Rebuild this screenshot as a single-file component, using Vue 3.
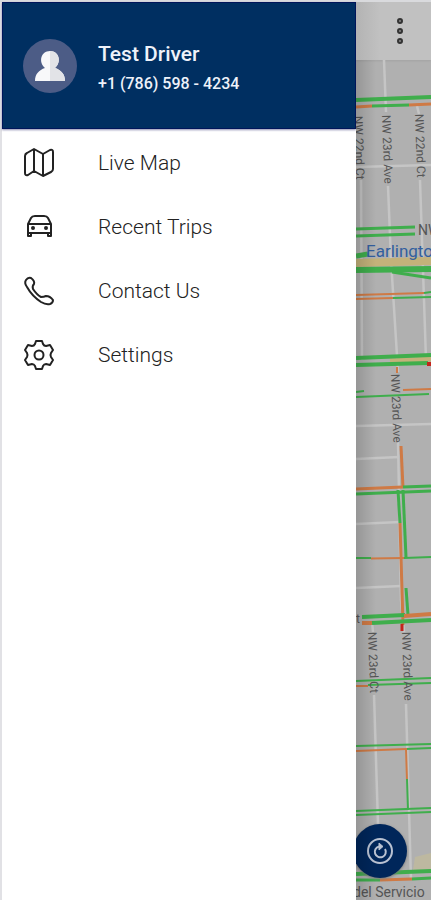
<template>
  <div class="screen">
    <aside class="drawer">
      <header class="profile">
        <svg class="avatar" viewBox="0 0 54 54" aria-hidden="true">
          <circle cx="27" cy="27" r="27" fill="#4c5c86" />
          <path
            d="M12 42c0-7 4-11 10-13-7-6-4-17 5-17s12 11 5 17c6 2 10 6 10 13z"
            fill="#f8f8fa"
          />
          <path d="M27 12c9 0 12 11 5 17 6 2 10 6 10 13H27z" fill="#e2e3e7" />
        </svg>
        <div class="driver">
          <h1 class="name">Test Driver</h1>
          <p class="phone">+1 (786) 598 - 4234</p>
        </div>
      </header>

      <nav class="menu">
        <a v-for="item in items" :key="item.label" class="link" href="#">
          <svg class="icon" viewBox="0 0 30 30" aria-hidden="true">
            <path v-for="d in item.paths" :key="d" :d="d" />
            <circle
              v-for="c in item.circles"
              :key="c.x"
              :cx="c.x"
              :cy="c.y"
              :r="c.r"
            />
          </svg>
          <span>{{ item.label }}</span>
        </a>
      </nav>
    </aside>

    <main class="content">
      <div class="toolbar">
        <button class="more" type="button" aria-label="More options">
          <svg viewBox="0 0 12 30" aria-hidden="true">
            <circle cx="6" cy="5" r="2" />
            <circle cx="6" cy="15" r="2" />
            <circle cx="6" cy="25" r="2" />
          </svg>
        </button>
      </div>

      <div class="map">
        <svg class="tiles" viewBox="356 60 75 840">
          <!-- park and minor streets -->
          <path d="M415 857L431 853V870H413z" fill="#bdb8a0" />
          <path
            v-for="d in streets"
            :key="d"
            :d="d"
            stroke="#c5c5c5"
            stroke-width="2.5"
            fill="none"
          />
          <path d="M356 263L431 261" stroke="#c3b27a" stroke-width="8" />
          <path d="M390 361L431 359" stroke="#c3b27a" stroke-width="5" />
          <!-- traffic -->
          <path
            v-for="t in traffic"
            :key="t.d"
            :d="t.d"
            :stroke="colors[t.c]"
            :stroke-width="t.w || 2"
            fill="none"
          />
          <g class="labels">
            <text
              v-for="l in labels"
              :key="l.x + '-' + l.y"
              :transform="`translate(${l.x} ${l.y}) rotate(${l.r})`"
            >
              {{ l.text }}
            </text>
            <text x="418" y="235" class="street">NW</text>
            <text x="366" y="257" class="place">Earlington</text>
            <text x="353" y="897" class="street">del Servicio</text>
          </g>
        </svg>
        <button class="refresh" type="button" aria-label="Refresh">
          <svg viewBox="0 0 28 28" aria-hidden="true">
            <circle cx="14" cy="14" r="12" stroke-width="2" />
            <path d="M19 12A5.500 5.500 0 1 1 13 9.500" stroke-width="2" />
            <path d="M13 6L17 9.500L13 13z" class="tip" />
          </svg>
        </button>
      </div>
    </main>
  </div>
</template>

<script setup>
const items = [
  {
    label: 'Live Map',
    paths: [
      'M1 8Q1 6 3 5L10 1L19 6L26 2Q29 1 29 4V21Q29 23 27 24L19 28L10 23L4 27Q1 28 1 25z',
      'M10 1V23',
      'M19 6V28',
    ],
  },
  {
    label: 'Recent Trips',
    paths: [
      'M4 12L7 6Q8 4 11 4H20Q23 4 24 6L27 12V24H24V21H7V24H4z',
      'M5 12H26',
      'M5 21H26',
    ],
    circles: [
      { x: 9, y: 16, r: 1 },
      { x: 22, y: 16, r: 1 },
    ],
  },
  {
    label: 'Contact Us',
    paths: [
      'M2 4Q4 1 7 2Q11 5 10 8Q8 10 9 13Q13 19 17 21Q20 21 22 20Q26 20 29 24Q29 27 26 28Q22 29 17 26Q8 20 3 11Q0 7 2 4z',
    ],
  },
  {
    label: 'Settings',
    paths: [
      'M12 1H18L19 4Q20 6 22 6L26 5L29 10L27 13Q26 15 27 17L29 20L26 25L22 24Q20 24 19 26L18 29H12L11 26Q10 24 8 24L4 25L1 20L3 17Q4 15 3 13L1 10L4 5L8 6Q10 6 11 4z',
    ],
    circles: [{ x: 15, y: 15, r: 4.5 }],
  },
]

const colors = { g: '#3fae4c', o: '#cf7a45', r: '#c4241c' }

const streets = [
  'M384 60L386 112M388 186L391 260L398 372',
  'M417 106L419 114M420 180L426 360',
  'M361 180L362 360',
  'M356 167L431 165',
  'M356 426L431 424',
  'M356 459L399 457',
  'M356 524L400 522',
  'M356 588L401 586',
  'M398 440L401 600L404 632',
  'M372 622L373 632M374 695L378 824',
  'M406 704L411 880',
]

const traffic = [
  { c: 'g', d: 'M356 100L431 97', w: 4 },
  { c: 'o', d: 'M356 107L372 106', w: 3 },
  { c: 'g', d: 'M372 106L409 105', w: 3 },
  { c: 'o', d: 'M409 105L431 104', w: 3 },
  { c: 'g', d: 'M356 229L415 227', w: 3 },
  { c: 'g', d: 'M356 236L415 234', w: 3 },
  { c: 'g', d: 'M356 256L368 254', w: 5 },
  { c: 'g', d: 'M356 270L431 269', w: 6 },
  { c: 'g', d: 'M392 272L431 278', w: 3 },
  { c: 'o', d: 'M356 295L424 293' },
  { c: 'g', d: 'M424 293L431 292' },
  { c: 'o', d: 'M356 299L393 298' },
  { c: 'g', d: 'M393 298L431 297' },
  { c: 'g', d: 'M356 358L431 355', w: 4 },
  { c: 'g', d: 'M356 365L428 363', w: 4 },
  { c: 'r', d: 'M427 364H431', w: 4 },
  { c: 'o', d: 'M397 367V373' },
  { c: 'g', d: 'M356 392L364 391' },
  { c: 'o', d: 'M403 390L431 389' },
  { c: 'g', d: 'M356 397L429 394' },
  { c: 'o', d: 'M401 446L403 488', w: 3 },
  { c: 'o', d: 'M356 489L403 487', w: 3 },
  { c: 'g', d: 'M403 487L431 486', w: 3 },
  { c: 'g', d: 'M356 494L431 491', w: 3 },
  { c: 'g', d: 'M398 490L400 523', w: 3 },
  { c: 'g', d: 'M403 490L406 557', w: 3 },
  { c: 'o', d: 'M400 523L403 625', w: 3 },
  { c: 'g', d: 'M356 558H371' },
  { c: 'o', d: 'M371 558.500L404 558' },
  { c: 'g', d: 'M404 558L431 557' },
  { c: 'g', d: 'M406 588L408 615', w: 3 },
  { c: 'g', d: 'M362 617L405 615', w: 4 },
  { c: 'o', d: 'M404 616L431 614', w: 4 },
  { c: 'o', d: 'M362 623H372', w: 4 },
  { c: 'g', d: 'M372 623L431 620', w: 4 },
  { c: 'r', d: 'M402 624V631', w: 3 },
  { c: 'g', d: 'M356 681L431 678' },
  { c: 'o', d: 'M356 686H368' },
  { c: 'g', d: 'M368 685L431 683' },
  { c: 'g', d: 'M356 746L431 744' },
  { c: 'o', d: 'M356 751L406 749' },
  { c: 'g', d: 'M406 749L431 748' },
  { c: 'o', d: 'M406 748L407 780' },
  { c: 'g', d: 'M407 779L408 810' },
  { c: 'g', d: 'M356 811L431 808' },
  { c: 'g', d: 'M356 815L431 812' },
  { c: 'g', d: 'M356 874L431 871', w: 4 },
  { c: 'o', d: 'M380 880L412 879', w: 3 },
  { c: 'g', d: 'M356 880H380M412 879L431 878', w: 3 },
]

const labels = [
  { text: 'NW 22nd Ct', x: 354, y: 116, r: 88 },
  { text: 'NW 23rd Ave', x: 382, y: 115, r: 88 },
  { text: 'NW 22nd Ct', x: 415, y: 114, r: 88 },
  { text: 'NW 23rd Ave', x: 391, y: 374, r: 88 },
  { text: 'NW 23rd Ct', x: 368, y: 632, r: 88 },
  { text: 'NW 23rd Ave', x: 402, y: 632, r: 88 },
  { text: 't', x: 356, y: 623, r: 0 },
]
</script>

<style>
body {
  margin: 0;
  background: #fff;
}
</style>

<style scoped>
.screen {
  display: grid;
  grid-template-columns: 356fr 75fr;
  min-height: 100vh;
  box-sizing: border-box;
  border-top: 2px solid #d9dadd;
  font-family: Roboto, "Liberation Sans", sans-serif;
}

.drawer {
  min-width: 0;
  background: #fff;
  border-left: 2px solid #e1e1e5;
}

.profile {
  display: flex;
  align-items: center;
  gap: 21px;
  height: 127px;
  padding: 0 20px;
  box-sizing: border-box;
  background: #002f61;
  border: 1px solid #00155a;
  box-shadow: 0 1px 2px #8d8db0;
  color: #eef2fa;
}

.avatar {
  flex: none;
  width: 54px;
  height: 54px;
}

.driver {
  padding-top: 4px;
}

.name {
  margin: 0;
  font-size: 21px;
  font-weight: 500;
  line-height: 32px;
}

.phone {
  margin: 0;
  font-size: 16px;
  font-weight: 500;
  line-height: 28px;
}

.menu {
  display: flex;
  flex-direction: column;
  padding-top: 2px;
}

.link {
  display: flex;
  align-items: center;
  gap: 44px;
  height: 64px;
  padding: 0 22px;
  color: #222;
  font-size: 21px;
  font-weight: 300;
  text-decoration: none;
}

.icon {
  width: 30px;
  height: 30px;
  overflow: visible;
  fill: none;
  stroke: #222;
  stroke-width: 2;
  stroke-linejoin: round;
}

.content {
  display: flex;
  flex-direction: column;
  min-width: 0;
  overflow: hidden;
  background: #b0b0b0;
}

.toolbar {
  display: flex;
  align-items: center;
  justify-content: center;
  height: 58px;
  padding-left: 13px;
  background: linear-gradient(to right, #b3b3b3, #c1c1c1 24px);
  box-shadow: 0 1px 2px #a3a3a3;
}

.more {
  width: 12px;
  height: 30px;
  padding: 0;
  border: 0;
  background: none;
}

.more svg {
  display: block;
  fill: #888;
  stroke: #333;
  stroke-width: 2;
}

.map {
  position: relative;
  flex: 1;
}

.map::after {
  content: "";
  position: absolute;
  inset: 0;
  background: linear-gradient(to right, rgba(0, 0, 0, 0.15), transparent 20px);
  pointer-events: none;
}

.tiles {
  display: block;
  width: 100%;
}

.labels {
  fill: #555;
  font-size: 12px;
}

.place {
  fill: #335f9e;
  font-size: 17px;
}

.street {
  font-size: 14px;
}

.refresh {
  position: absolute;
  bottom: 22px;
  left: -3px;
  display: flex;
  align-items: center;
  justify-content: center;
  width: 54px;
  height: 54px;
  padding: 0;
  border: 0;
  border-radius: 50%;
  background: #00265a;
  box-shadow: 0 1px 3px #777;
}

.refresh svg {
  width: 28px;
  height: 28px;
  fill: none;
  stroke: #b9c2d2;
}

.refresh .tip {
  fill: #b9c2d2;
}
</style>
